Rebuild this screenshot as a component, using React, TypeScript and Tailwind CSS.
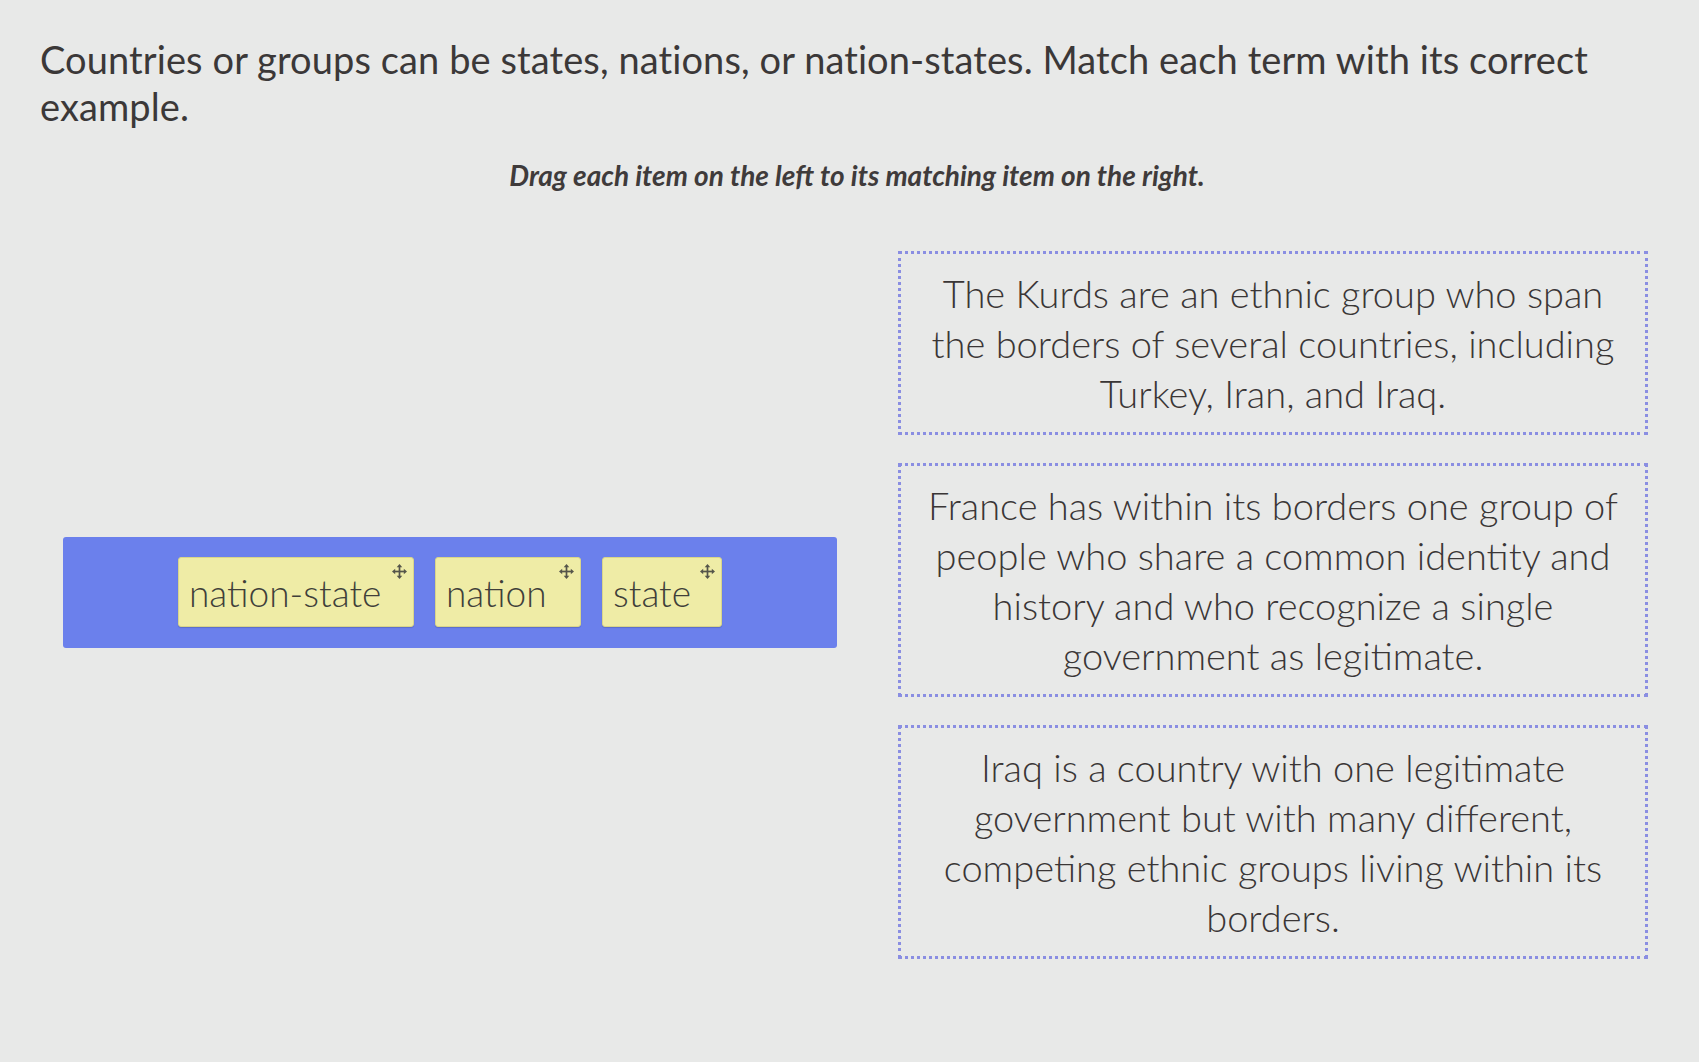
import React from "react";

const font = { fontFamily: "Lato, 'Noto Sans', sans-serif" };

function MoveIcon() {
  return (
    <svg width="15" height="15" viewBox="0 0 14 14" className="absolute right-[6px] top-[6px]" fill="#55554a">
      <rect x="6.2" y="2" width="1.6" height="10" />
      <rect x="2" y="6.2" width="10" height="1.6" />
      <path d="M7 0 L9.6 3 L4.4 3 Z" />
      <path d="M7 14 L9.6 11 L4.4 11 Z" />
      <path d="M0 7 L3 4.4 L3 9.6 Z" />
      <path d="M14 7 L11 4.4 L11 9.6 Z" />
    </svg>
  );
}

function Chip({ label, width }: { label: string; width: string }) {
  return (
    <div
      className={`relative flex h-[70px] items-center rounded-[3px] border border-[#d9d58a] bg-[#efeca6] pl-[10px] text-[37px] font-light text-[#403f3a] shadow-[0_1px_1px_rgba(0,0,0,0.15)] ${width}`}
    >
      <span className="leading-none">{label}</span>
      <MoveIcon />
    </div>
  );
}

function DropBox({ lines }: { lines: string[] }) {
  return (
    <div className="border-[3px] border-dotted border-[#8a8ee2] px-4 py-[14px] text-center text-[38px] font-light leading-[50px] text-[#3a3636]">
      {lines.map((l, i) => (
        <div key={i}>{l}</div>
      ))}
    </div>
  );
}

export default function App() {
  return (
    <div className="min-h-[1062px] w-full bg-[#e8e9e8] pl-[40px] pt-[36px]" style={font}>
      <h1 className="w-[1620px] text-[38px] leading-[47px] tracking-[0.1px] text-[#3b3838]">
        Countries or groups can be states, nations, or nation-states. Match each term with its correct example.
      </h1>
      <p className="mt-[24px] w-[1634px] text-center text-[28px] font-bold italic text-[#3f3b3b]">
        Drag each item on the left to its matching item on the right.
      </p>
      <div className="ml-[23px] mt-[55px] flex items-center gap-[61px]">
        <div className="mb-[26px] flex h-[111px] w-[774px] items-center justify-center gap-[21px] rounded-[3px] bg-[#6b80ec]">
          <Chip label="nation-state" width="w-[236px]" />
          <Chip label="nation" width="w-[146px]" />
          <Chip label="state" width="w-[120px]" />
        </div>
        <div className="flex w-[750px] flex-col gap-[28px]">
          <DropBox
            lines={[
              "The Kurds are an ethnic group who span",
              "the borders of several countries, including",
              "Turkey, Iran, and Iraq.",
            ]}
          />
          <DropBox
            lines={[
              "France has within its borders one group of",
              "people who share a common identity and",
              "history and who recognize a single",
              "government as legitimate.",
            ]}
          />
          <DropBox
            lines={[
              "Iraq is a country with one legitimate",
              "government but with many different,",
              "competing ethnic groups living within its",
              "borders.",
            ]}
          />
        </div>
      </div>
    </div>
  );
}
